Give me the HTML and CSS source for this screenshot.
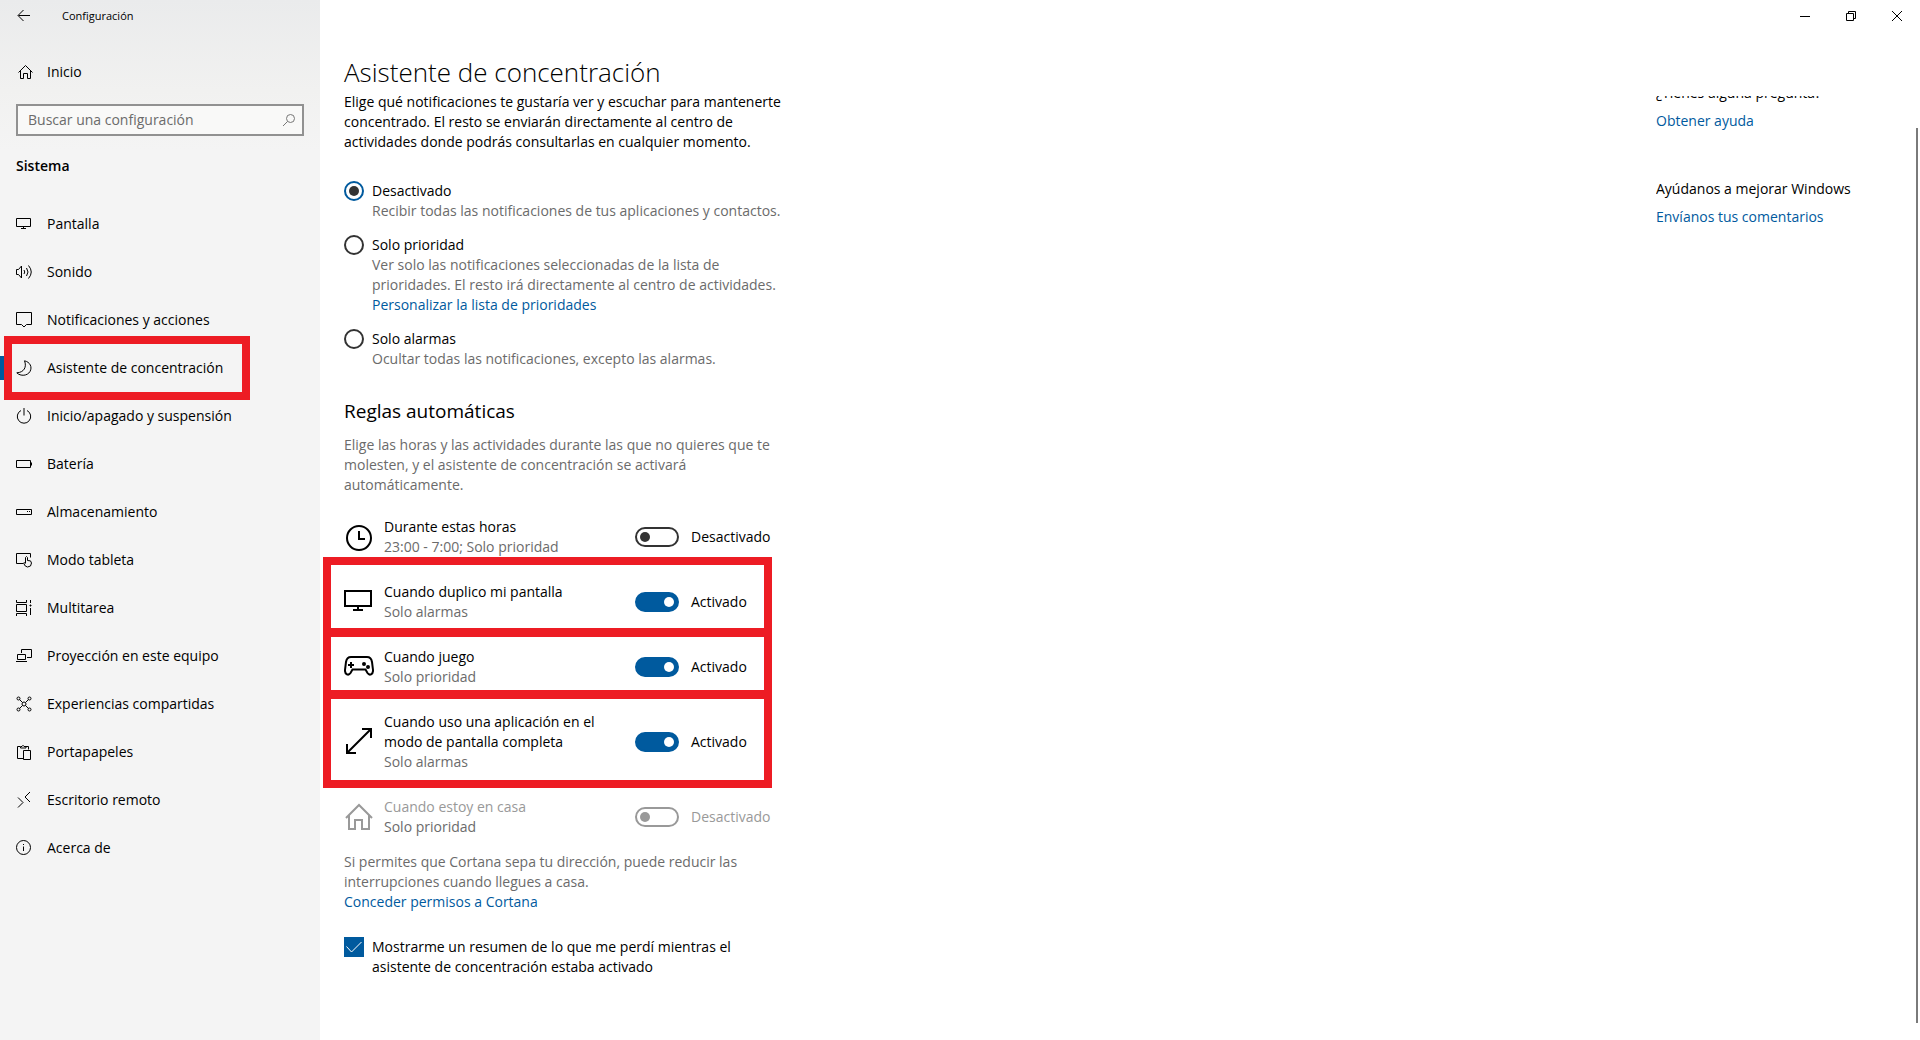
FILE: index.html
```html
<!DOCTYPE html>
<html lang="es">
<head>
  <meta charset="UTF-8" />
  <title>Configuración</title>
  <meta name="viewport" content="width=device-width, initial-scale=1" />
  <link rel="stylesheet" href="styles.css">
</head>
<body>

  <aside class="sidebar">
    <div class="app-bar">
      <button class="back" aria-label="Atrás">
        <svg class="icon" viewBox="0 0 16 16"><path d="M14 7.500H2.500M7.500 2L2 7.500l5.500 5.500"/></svg>
      </button>
      <span class="app-name">Configuración</span>
    </div>

    <a href="#" class="home">
      <svg class="icon" viewBox="0 0 16 16"><path d="M1.500 8.500L8.500 1.500l7 7M3.500 7v7.500h3v-5h4v5h3V7"/></svg>
      Inicio
    </a>

    <form class="search">
      <input type="text" placeholder="Buscar una configuración" aria-label="Buscar una configuración">
      <button type="submit" aria-label="Buscar">
        <svg class="icon" viewBox="0 0 16 16"><circle cx="9.500" cy="6.500" r="4"/><path d="M6.500 9.500L2 14"/></svg>
      </button>
    </form>

    <h2 class="group-title">Sistema</h2>

    <nav>
      <ul>
        <li><a href="#">
          <svg class="icon" viewBox="0 0 16 16"><path d="M.5 2.500h14v8H.5zM7.500 10.500v2M5 12.500h5"/></svg>
          Pantalla</a></li>
        <li><a href="#">
          <svg class="icon" viewBox="0 0 16 16"><path d="M.5 5.500h2l3-3.500v12l-3-3.500h-2zM8 6q1.500 2 0 4M10.500 4q3 4 0 8M12.500 1.500q5.500 6.500 0 13"/></svg>
          Sonido</a></li>
        <li><a href="#">
          <svg class="icon" viewBox="0 0 16 16"><path d="M.5.5h15v12h-5L8 15l-2.500-2.500h-5z"/></svg>
          Notificaciones y acciones</a></li>
        <li><a href="#" class="active">
          <svg class="icon" viewBox="0 0 16 16"><path d="M8.500.8C14 2 16.500 7 14 11.500 11.500 16 4.500 16.500.8 12.800 8 12.500 11 7 8.500.8z"/></svg>
          Asistente de concentración</a></li>
        <li><a href="#">
          <svg class="icon" viewBox="0 0 16 16"><path d="M8 0v7.500M5 2.500a6.700 6.700 0 1 0 6 0"/></svg>
          Inicio/apagado y suspensión</a></li>
        <li><a href="#">
          <svg class="icon" viewBox="0 0 16 16"><path d="M.5 4.500h14v7H.5zM15.500 6.500v3"/></svg>
          Batería</a></li>
        <li><a href="#">
          <svg class="icon" viewBox="0 0 16 16"><path d="M.5 5.500h15v5H.5zM11 7.500h1M13 7.500h1"/></svg>
          Almacenamiento</a></li>
        <li><a href="#">
          <svg class="icon" viewBox="0 0 16 16"><path d="M7 11.500H.5v-10h14v4M9.500 11V5.500q1-2 2 0v3q4-.5 4 2.500 0 4-4 4-2.500 0-4-4 .5-1 2 .5"/></svg>
          Modo tableta</a></li>
        <li><a href="#">
          <svg class="icon" viewBox="0 0 16 16"><path d="M.5 4.500h10v7H.5zM.5 0v2.500h10V0M.5 16v-2.500h10V16M14.500 0v3M14.500 8v7M13.500 5.500h2M14.500 4.500v2"/></svg>
          Multitarea</a></li>
        <li><a href="#">
          <svg class="icon" viewBox="0 0 16 16"><path d="M5.500 5V1.500h10v8H11M1.500 6.500h8v5h-8zM0 13.500h11"/></svg>
          Proyección en este equipo</a></li>
        <li><a href="#">
          <svg class="icon" viewBox="0 0 16 16"><circle cx="2.500" cy="2.500" r="1.500"/><circle cx="13.500" cy="2.500" r="1.500"/><circle cx="2.500" cy="13.500" r="1.500"/><circle cx="13.500" cy="13.500" r="1.500"/><circle cx="8" cy="8" r="2"/><path d="M3.500 3.500l3 3M12.500 3.500l-3 3M3.500 12.500l3-3M12.500 12.500l-3-3"/></svg>
          Experiencias compartidas</a></li>
        <li><a href="#">
          <svg class="icon" viewBox="0 0 16 16"><path d="M7 14.500H1.500v-12H4M10 2.500h2.500v3M4.500 4V2.500h1.500q1-2.500 2 0h2V4zM7.500 6.500h7v9h-7z"/></svg>
          Portapapeles</a></li>
        <li><a href="#">
          <svg class="icon" viewBox="0 0 16 16"><path d="M2 5.500l5 5-5 5M14 0L9 5l5 5"/></svg>
          Escritorio remoto</a></li>
        <li><a href="#">
          <svg class="icon" viewBox="0 0 16 16"><circle cx="7.500" cy="7.500" r="7"/><path d="M7.500 6.500V11M7.500 4v1"/></svg>
          Acerca de</a></li>
      </ul>
    </nav>
  </aside>

  <div class="page">
    <div class="window-controls">
      <button aria-label="Minimizar"><svg viewBox="0 0 10 10"><path d="M0 5.500h10"/></svg></button>
      <button aria-label="Restaurar"><svg viewBox="0 0 10 10"><path d="M.5 2.500h7v7h-7zM2.500 2.500v-2h7v7h-2"/></svg></button>
      <button aria-label="Cerrar"><svg viewBox="0 0 10 10"><path d="M0 0l10 10M10 0L0 10"/></svg></button>
    </div>

    <div class="columns">
      <main class="content">
        <h1>Asistente de concentración</h1>
        <p>Elige qué notificaciones te gustaría ver y escuchar para mantenerte concentrado. El resto se enviarán directamente al centro de actividades donde podrás consultarlas en cualquier momento.</p>

        <div class="modes">
          <div class="option">
            <input type="radio" name="mode" id="mode-off" checked>
            <div>
              <label for="mode-off">Desactivado</label>
              <p class="hint">Recibir todas las notificaciones de tus aplicaciones y contactos.</p>
            </div>
          </div>
          <div class="option">
            <input type="radio" name="mode" id="mode-priority">
            <div>
              <label for="mode-priority">Solo prioridad</label>
              <p class="hint">Ver solo las notificaciones seleccionadas de la lista de prioridades. El resto irá directamente al centro de actividades.</p>
              <a href="#">Personalizar la lista de prioridades</a>
            </div>
          </div>
          <div class="option">
            <input type="radio" name="mode" id="mode-alarms">
            <div>
              <label for="mode-alarms">Solo alarmas</label>
              <p class="hint">Ocultar todas las notificaciones, excepto las alarmas.</p>
            </div>
          </div>
        </div>

        <h2>Reglas automáticas</h2>
        <p class="hint">Elige las horas y las actividades durante las que no quieres que te molesten, y el asistente de concentración se activará automáticamente.</p>

        <div class="rules">
          <div class="rule">
            <svg class="rule-icon" viewBox="0 0 30 30"><circle cx="15" cy="16" r="12"/><path d="M15 9v8h6"/></svg>
            <div class="rule-text">
              <label for="rule-hours">Durante estas horas</label>
              <p class="hint">23:00 - 7:00; Solo prioridad</p>
            </div>
            <input type="checkbox" class="toggle" id="rule-hours">
            <span>Desactivado</span>
          </div>

          <div class="marked">
            <div class="rule">
              <svg class="rule-icon" viewBox="0 0 30 30"><path d="M1 4h26v15H1zM14 19v4M9 23h10"/></svg>
              <div class="rule-text">
                <label for="rule-mirror">Cuando duplico mi pantalla</label>
                <p class="hint">Solo alarmas</p>
              </div>
              <input type="checkbox" class="toggle" id="rule-mirror" checked>
              <span>Activado</span>
            </div>
            <div class="rule">
              <svg class="rule-icon" viewBox="0 0 30 30"><path d="M7 5h16c3 0 4.500 2 5 5l1 8c.3 4.500-3.500 6-5.500 3l-2-3.500h-13L6.500 21c-2 3-5.800 1.500-5.500-3l1-8c.5-3 2-5 5-5zM4 13h6M7 10v6"/><circle class="dot" cx="20" cy="12" r="1"/><circle class="dot" cx="24" cy="15" r="1"/></svg>
              <div class="rule-text">
                <label for="rule-game">Cuando juego</label>
                <p class="hint">Solo prioridad</p>
              </div>
              <input type="checkbox" class="toggle" id="rule-game" checked>
              <span>Activado</span>
            </div>
            <div class="rule">
              <svg class="rule-icon" viewBox="0 0 30 30"><path d="M3 26L27 2M18 2h9v9M3 17v9h9"/></svg>
              <div class="rule-text">
                <label for="rule-full">Cuando uso una aplicación en el modo de pantalla completa</label>
                <p class="hint">Solo alarmas</p>
              </div>
              <input type="checkbox" class="toggle" id="rule-full" checked>
              <span>Activado</span>
            </div>
          </div>

          <div class="rule disabled">
            <svg class="rule-icon" viewBox="0 0 30 30"><path d="M2 16L15 3l13 13M5 13v14h6V18h7v9h7V13"/></svg>
            <div class="rule-text">
              <label for="rule-home">Cuando estoy en casa</label>
              <p class="hint">Solo prioridad</p>
            </div>
            <input type="checkbox" class="toggle" id="rule-home" disabled>
            <span>Desactivado</span>
          </div>
        </div>

        <p class="hint">Si permites que Cortana sepa tu dirección, puede reducir las interrupciones cuando llegues a casa.</p>
        <a href="#">Conceder permisos a Cortana</a>

        <div class="option summary">
          <span class="check">
            <input type="checkbox" id="summary" checked>
            <svg viewBox="0 0 20 20"><path d="M2.500 9.500l5 5.500L17.500 5"/></svg>
          </span>
          <label for="summary">Mostrarme un resumen de lo que me perdí mientras el asistente de concentración estaba activado</label>
        </div>
      </main>

      <aside class="help">
        <section>
          <p>¿Tienes alguna pregunta?</p>
          <a href="#">Obtener ayuda</a>
        </section>
        <section>
          <p>Ayúdanos a mejorar Windows</p>
          <a href="#">Envíanos tus comentarios</a>
        </section>
      </aside>
    </div>

    <div class="scrollbar"></div>
  </div>

</body>
</html>
```

FILE: styles.css
```css
/* Reset and base */
*,
*::before,
*::after {
  box-sizing: border-box;
  margin: 0;
  padding: 0;
}
body {
  display: flex;
  min-height: 100vh;
  font-family: "Open Sans", "Noto Sans", sans-serif;
  font-size: 14px;
  line-height: 20px;
  color: #000;
  background: #fff;
}
a {
  color: #005a9e;
  text-decoration: none;
}
button {
  border: none;
  background: none;
}
svg {
  fill: none;
  stroke: #000;
}
input {
  font: inherit;
}

/* Sidebar */
.sidebar {
  width: 320px;
  flex-shrink: 0;
  background: linear-gradient(#eaebec, #f1f1f0 90px, #f4f4f4 150px);
}
.icon {
  width: 16px;
  height: 16px;
  flex-shrink: 0;
}
.app-bar {
  display: flex;
  align-items: center;
  height: 32px;
}
.back {
  display: flex;
  justify-content: center;
  width: 48px;
}
.app-name {
  margin-left: 14px;
  font-size: 11px;
}
.home {
  display: flex;
  align-items: center;
  gap: 14px;
  height: 48px;
  margin-top: 16px;
  padding-left: 17px;
  color: #000;
}
.search {
  display: flex;
  align-items: center;
  height: 32px;
  margin: 8px 16px 0;
  border: 2px solid #919191;
  background: #f9f9f8;
}
.search input {
  flex: 1;
  min-width: 0;
  padding-left: 10px;
  border: none;
  outline: none;
  background: transparent;
}
.search input::placeholder {
  color: #6b6b6b;
}
.search button {
  display: flex;
  padding: 0 5px;
}
.search svg {
  stroke: #777;
}
.group-title {
  margin: 20px 16px 24px;
  font-size: 14px;
  line-height: 20px;
  font-weight: 600;
}
.sidebar nav ul {
  list-style: none;
}
.sidebar nav a {
  position: relative;
  display: flex;
  align-items: center;
  gap: 15px;
  height: 48px;
  padding-left: 16px;
  color: #000;
}
.sidebar nav .active::before {
  content: "";
  position: absolute;
  left: 0;
  top: 12px;
  width: 4px;
  height: 24px;
  background: #005a9e;
}
.sidebar nav .active::after {
  content: "";
  position: absolute;
  left: 4px;
  top: -8px;
  width: 246px;
  height: 64px;
  border: 8px solid #ed1c24;
}

/* Page */
.page {
  position: relative;
  flex: 1;
}
.window-controls {
  display: flex;
  justify-content: flex-end;
  height: 32px;
}
.window-controls button {
  display: flex;
  align-items: center;
  justify-content: center;
  width: 46px;
}
.window-controls svg {
  width: 10px;
  height: 10px;
}
.columns {
  display: flex;
  justify-content: space-between;
  padding-left: 24px;
}
.content {
  width: 448px;
  padding: 20px 0;
}
h1 {
  font-size: 26px;
  line-height: 40px;
  font-weight: 300;
}
.content h2 {
  margin: 28px 0 10px;
  font-size: 19px;
  line-height: 28px;
  font-weight: 400;
}
.hint {
  color: #6b6b6b;
}

/* Radio options */
.modes {
  display: flex;
  flex-direction: column;
  gap: 14px;
  margin-top: 29px;
}
.option {
  display: flex;
  gap: 8px;
}
.option input {
  appearance: none;
  flex-shrink: 0;
  width: 20px;
  height: 20px;
}
.option input[type="radio"] {
  display: flex;
  border: 2px solid #333;
  border-radius: 50%;
}
.option input[type="radio"]:checked {
  border-color: #005a9e;
}
.option input[type="radio"]:checked::before {
  content: "";
  width: 10px;
  height: 10px;
  margin: auto;
  border-radius: 50%;
  background: #333;
}
.summary {
  margin-top: 25px;
}
.check {
  position: relative;
  width: 20px;
  height: 20px;
  flex-shrink: 0;
}
.check input {
  display: block;
}
.check input:checked {
  background: #005a9e;
}
.check svg {
  position: absolute;
  inset: 0;
  stroke: #fff;
  pointer-events: none;
}

/* Automatic rules */
.rules {
  margin: 22px 0 15px;
}
.rule {
  display: grid;
  grid-template-columns: 40px 251px 56px auto;
  justify-content: start;
  align-items: center;
}
.rule-icon {
  width: 30px;
  height: 30px;
  stroke-width: 2;
}
.rule-icon .dot {
  fill: #000;
}
.rule-text {
  padding-right: 24px;
}
.rule-text label {
  display: block;
}
.toggle {
  appearance: none;
  display: flex;
  align-items: center;
  width: 44px;
  height: 20px;
  padding: 0 3px;
  border: 2px solid #333;
  border-radius: 10px;
}
.toggle::before {
  content: "";
  width: 10px;
  height: 10px;
  border-radius: 50%;
  background: #333;
}
.toggle:checked {
  justify-content: flex-end;
  border-color: #005a9e;
  background: #005a9e;
}
.toggle:checked::before {
  background: #fff;
}
.disabled label,
.disabled span {
  color: #999;
}
.disabled svg {
  stroke: #999;
}
.disabled .toggle {
  border-color: #999;
}
.disabled .toggle::before {
  background: #999;
}

/* Rules framed in red */
.marked {
  width: 449px;
  margin: 0 0 9px -21px;
  border: 8px solid #ed1c24;
}
.marked .rule {
  padding: 17px 0 6px 13px;
}
.marked .rule + .rule {
  padding: 10px 0 3px 13px;
  border-top: 9px solid #ed1c24;
}
.marked .rule:last-child {
  padding: 13px 0 8px 13px;
}

/* Help column, its first line is partly scrolled away */
.help {
  width: 264px;
  margin-top: 64px;
  overflow: hidden;
}
.help section {
  margin-bottom: 48px;
}
.help section:first-child {
  margin-top: -13px;
}
.help p {
  margin-bottom: 8px;
}
.help a {
  display: block;
}

.scrollbar {
  position: absolute;
  top: 128px;
  right: 2px;
  bottom: 17px;
  width: 2px;
  background: #7a7a7a;
}
```
